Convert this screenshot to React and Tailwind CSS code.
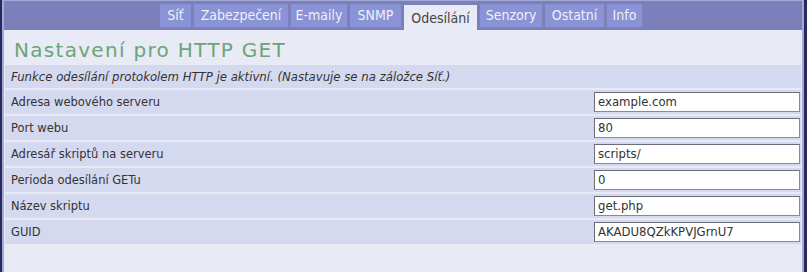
import React from "react";

const tabs = [
  { name: "Síť", w: "w-[31px]" },
  { name: "Zabezpečení", w: "w-[94px]" },
  { name: "E-maily", w: "w-[56px]" },
  { name: "SNMP", w: "w-[51px]" },
  { name: "Odesílání", w: "w-[73px]", active: true },
  { name: "Senzory", w: "w-[62px]" },
  { name: "Ostatní", w: "w-[59px]" },
  { name: "Info", w: "w-[35px]" },
];

const rows = [
  { label: "Adresa webového serveru", value: "example.com" },
  { label: "Port webu", value: "80" },
  { label: "Adresář skriptů na serveru", value: "scripts/" },
  { label: "Perioda odesílání GETu", value: "0" },
  { label: "Název skriptu", value: "get.php" },
  { label: "GUID", value: "AKADU8QZkKPVJGrnU7" },
];

export default function App() {
  return (
    <div
      className="w-[807px] h-[272px] overflow-hidden bg-[#262a5c] border-l-2 border-r-[3px] border-[#262a5c] text-[#333]"
      style={{ fontFamily: '"DejaVu Sans Condensed", "DejaVu Sans", sans-serif' }}
    >
      <div className="h-full flex flex-col border-l-2 border-r-2 border-t border-[#a4a8d4] bg-[#e8eaf5]">
        {/* Tabs */}
        <div className="h-[29px] bg-[#7b80bb] flex items-start pl-[156px] gap-[3px] pt-[3px] shrink-0">
          {tabs.map((t) =>
            t.active ? (
              <div
                key={t.name}
                className={`${t.w} h-[26px] mt-[1px] bg-[#e8eaf5] text-[#444] text-[14px] flex items-center justify-center`}
              >
                {t.name}
              </div>
            ) : (
              <div
                key={t.name}
                className={`${t.w} h-[23px] bg-[#8a93d6] text-[#eef0fb] text-[14px] flex items-center justify-center`}
              >
                {t.name}
              </div>
            )
          )}
        </div>

        {/* Content */}
        <div className="flex flex-col px-[1px]">
          <h1
            className="h-[35px] pl-[9px] pt-[8px] text-[20px] leading-[24px] tracking-[1.3px] text-[#6aa577]"
            style={{ fontFamily: '"DejaVu Sans", sans-serif' }}
          >
            Nastavení pro HTTP GET
          </h1>
          <div className="h-[23px] bg-[#d5d9ef] pl-[6px] flex items-center text-[13px] italic text-[#333]">
            Funkce odesílání protokolem HTTP je aktivní. (Nastavuje se na záložce Síť.)
          </div>
          <div className="flex flex-col gap-[2px] pt-[2px]">
            {rows.map((r) => (
              <div key={r.label} className="h-[24px] bg-[#d5d9ef] flex items-center justify-between pl-[6px] pr-[1px]">
                <span className="text-[12.75px] text-[#333]">{r.label}</span>
                <div className="w-[206px] h-[20px] bg-white border border-[#8a8a96] border-t-[#6d6d7a] border-l-[#6d6d7a] flex items-center pl-[3px] text-[13px] text-[#333]">
                  {r.value}
                </div>
              </div>
            ))}
          </div>
        </div>
      </div>
    </div>
  );
}
